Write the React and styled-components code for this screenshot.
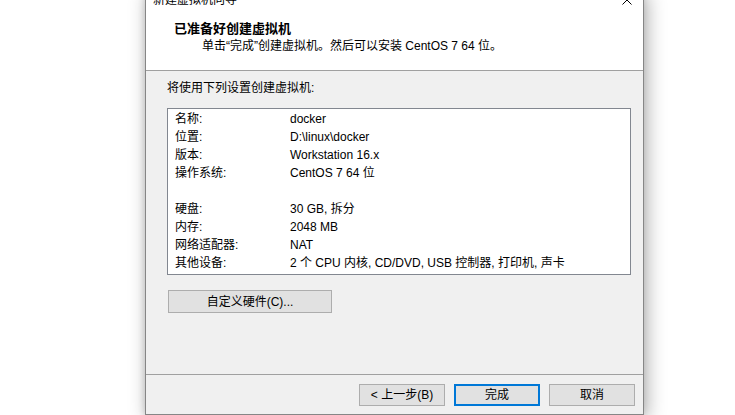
import React from "react";
import styled, { createGlobalStyle } from "styled-components";

const Global = createGlobalStyle`
  html, body { margin: 0; padding: 0; background: #ffffff; }
  body {
    font-family: "Liberation Sans", "Noto Sans CJK SC", sans-serif;
    font-size: 12px;
    color: #000;
    overflow: hidden;
  }
`;

const Page = styled.div`
  width: 735px;
  height: 415px;
  overflow: hidden;
  background: #fff;
`;

const Window = styled.div`
  margin-top: -10px;
  margin-left: 145px;
  width: 499px;
  height: 425px;
  box-sizing: border-box;
  border: 1px solid #868686;
  background: #f0f0f0;
  box-shadow: 3px 4px 18px rgba(0, 0, 0, 0.32), -1px 0 6px rgba(0, 0, 0, 0.12);
  display: flex;
  flex-direction: column;
`;

const TitleBar = styled.div`
  height: 18px;
  flex: none;
  background: #fff;
  display: flex;
  align-items: center;
  justify-content: space-between;
  padding: 0 11px 0 7px;
  line-height: 18px;
`;

const TitleText = styled.span`
  font-size: 12px;
  color: #000;
`;

const Header = styled.div`
  flex: none;
  background: #fff;
  padding: 11px 0 15px 28px;
  border-bottom: 1px solid #a0a0a0;
`;

const Heading = styled.div`
  font-weight: bold;
  font-size: 13px;
  line-height: 17px;
`;

const SubHeading = styled.div`
  line-height: 18px;
  padding-left: 28px;
`;

const Body = styled.div`
  flex: 1;
  padding: 8px 12px 0 21px;
  display: flex;
  flex-direction: column;
`;

const Intro = styled.div`
  line-height: 18px;
`;

const ListBox = styled.div`
  margin-top: 11px;
  height: 167px;
  box-sizing: border-box;
  border: 1px solid #828790;
  background: #fff;
  padding: 1px 0 0 7px;
`;

const Row = styled.div`
  display: grid;
  grid-template-columns: 115px 1fr;
  height: 18px;
  line-height: 18px;
  white-space: nowrap;
`;

const Button = styled.button`
  font-family: "Liberation Sans", "Noto Sans CJK SC", sans-serif;
  font-size: 12px;
  color: #000;
  background: #e1e1e1;
  border: ${(p) => (p.$primary ? "2px solid #0078d7" : "1px solid #adadad")};
  box-sizing: border-box;
  width: ${(p) => p.$w}px;
  height: ${(p) => p.$h}px;
  padding: 0;
  margin: 0;
  display: flex;
  align-items: center;
  justify-content: center;
  line-height: 1;
`;

const CustomButton = styled(Button)`
  margin-top: 15px;
  margin-left: 1px;
`;

const Footer = styled.div`
  flex: none;
  border-top: 1px solid #a0a0a0;
  padding: 9px 8px 8px 0;
  display: flex;
  justify-content: flex-end;
  gap: 9px;
`;

const rows = [
  ["名称:", "docker"],
  ["位置:", "D:\\linux\\docker"],
  ["版本:", "Workstation 16.x"],
  ["操作系统:", "CentOS 7 64 位"],
  ["", ""],
  ["硬盘:", "30 GB, 拆分"],
  ["内存:", "2048 MB"],
  ["网络适配器:", "NAT"],
  ["其他设备:", "2 个 CPU 内核, CD/DVD, USB 控制器, 打印机, 声卡"],
];

export default function App() {
  return (
    <Page>
      <Global />
      <Window>
        <TitleBar>
          <TitleText>新建虚拟机向导</TitleText>
          <svg width="10" height="10" viewBox="0 0 10 10">
            <path d="M0.5 0.5 L9.5 9.5 M9.5 0.5 L0.5 9.5" stroke="#000" strokeWidth="1" fill="none" />
          </svg>
        </TitleBar>
        <Header>
          <Heading>已准备好创建虚拟机</Heading>
          <SubHeading>单击“完成”创建虚拟机。然后可以安装 CentOS 7 64 位。</SubHeading>
        </Header>
        <Body>
          <Intro>将使用下列设置创建虚拟机:</Intro>
          <ListBox>
            {rows.map(([k, v], i) => (
              <Row key={i}>
                <span>{k}</span>
                <span>{v}</span>
              </Row>
            ))}
          </ListBox>
          <CustomButton $w={164} $h={23}>自定义硬件(C)...</CustomButton>
        </Body>
        <Footer>
          <Button $w={86} $h={22}>&lt; 上一步(B)</Button>
          <Button $w={86} $h={22} $primary>完成</Button>
          <Button $w={86} $h={22}>取消</Button>
        </Footer>
      </Window>
    </Page>
  );
}
